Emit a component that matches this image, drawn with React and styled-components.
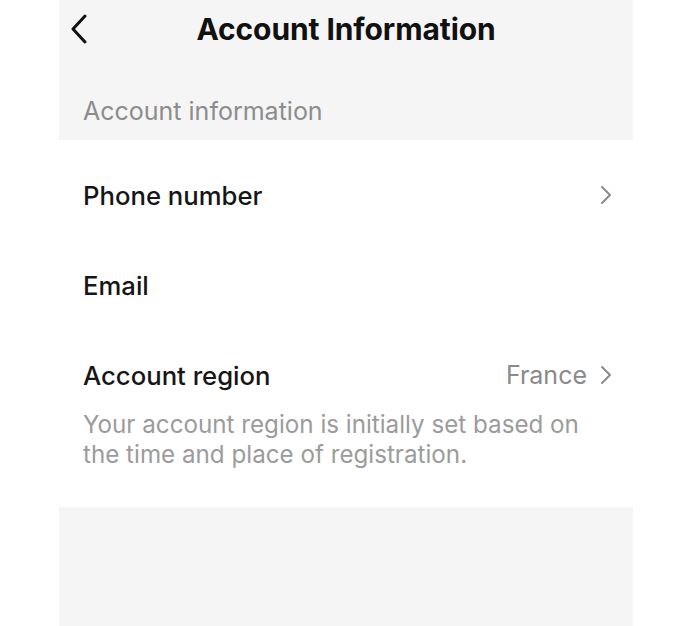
import styled, { createGlobalStyle } from "styled-components";

const GlobalStyle = createGlobalStyle`
  html, body {
    margin: 0;
    padding: 0;
    background: #ffffff;
  }
  body {
    font-family: Inter, "Liberation Sans", Arial, sans-serif;
    -webkit-font-smoothing: antialiased;
  }
`;

const Page = styled.div`
  display: flex;
  justify-content: center;
  min-height: 100vh;
  background: #ffffff;
`;

const Screen = styled.div`
  width: 574px;
  min-height: 100vh;
  display: flex;
  flex-direction: column;
  background: #f5f5f5;
`;

const Header = styled.header`
  position: relative;
  height: 58px;
  display: flex;
  align-items: center;
  justify-content: center;
`;

const BackButton = styled.button`
  position: absolute;
  left: 10px;
  top: 14px;
  width: 20px;
  height: 30px;
  padding: 0;
  border: none;
  background: transparent;
  display: flex;
  align-items: center;
  justify-content: center;
  cursor: pointer;
`;

const Title = styled.h1`
  margin: 0;
  font-size: 30px;
  font-weight: 700;
  color: #111111;
  letter-spacing: -0.1px;
`;

const SectionLabel = styled.div`
  height: 82px;
  padding: 24px 24px 0;
  box-sizing: border-box;
  display: flex;
  align-items: center;
  font-size: 25px;
  color: #8c8c8c;
`;

const Card = styled.section`
  background: #ffffff;
  padding: 10px 0 37px;
`;

const Row = styled.div`
  height: ${(p) => p.$height || 90}px;
  margin-top: ${(p) => p.$gap || 0}px;
  padding: 0 21px 0 24px;
  display: flex;
  align-items: center;
  justify-content: space-between;
`;

const Label = styled.span`
  font-size: 25.7px;
  font-weight: 500;
  color: #161616;
`;

const Value = styled.span`
  display: flex;
  align-items: center;
  gap: 13px;
  font-size: 25px;
  color: #8a8a8a;
`;

const Note = styled.p`
  margin: 0;
  padding: 0 30px 0 24px;
  font-size: 24.2px;
  line-height: 30px;
  color: #9b9b9b;
`;

const Chevron = ({ color = "#8a8a8a" }) => (
  <svg width="12" height="20" viewBox="0 0 12 20" fill="none">
    <path
      d="M2 2 L10 10 L2 18"
      stroke={color}
      strokeWidth="2"
      strokeLinecap="round"
      strokeLinejoin="round"
    />
  </svg>
);

const BackIcon = () => (
  <svg width="18" height="30" viewBox="0 0 18 30" fill="none">
    <path
      d="M15 2 L3 15 L15 28"
      stroke="#111111"
      strokeWidth="3"
      strokeLinecap="round"
      strokeLinejoin="round"
    />
  </svg>
);

export default function App() {
  return (
    <>
      <GlobalStyle />
      <Page>
        <Screen>
          <Header>
            <BackButton aria-label="Back">
              <BackIcon />
            </BackButton>
            <Title>Account Information</Title>
          </Header>
          <SectionLabel>Account information</SectionLabel>
          <Card>
            <Row>
              <Label>Phone number</Label>
              <Value>
                <Chevron />
              </Value>
            </Row>
            <Row>
              <Label>Email</Label>
            </Row>
            <Row $height={70} $gap={10}>
              <Label>Account region</Label>
              <Value>
                France
                <Chevron />
              </Value>
            </Row>
            <Note>
              Your account region is initially set based on the time and place
              of registration.
            </Note>
          </Card>
        </Screen>
      </Page>
    </>
  );
}
